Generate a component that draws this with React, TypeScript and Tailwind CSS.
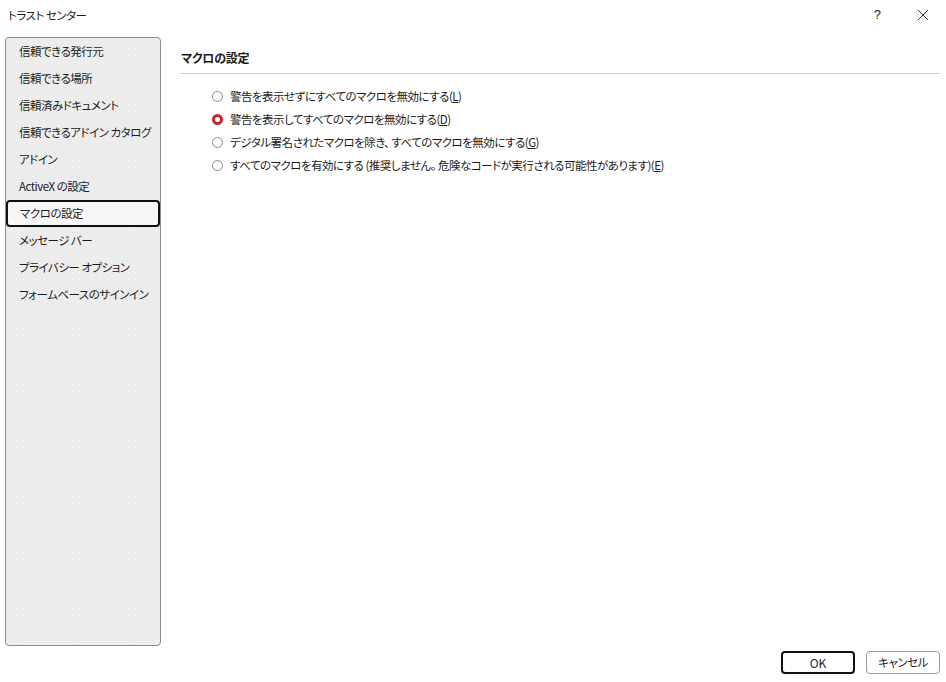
import React from "react";

const font = "font-['Yu_Gothic_UI','Noto_Sans_CJK_JP',sans-serif] [font-feature-settings:'palt']";

const items = [
  "信頼できる発行元",
  "信頼できる場所",
  "信頼済みドキュメント",
  "信頼できるアドイン カタログ",
  "アドイン",
  "ActiveX の設定",
  "マクロの設定",
  "メッセージ バー",
  "プライバシー オプション",
  "フォームベースのサインイン",
];

const options: { text: string; key: string }[] = [
  { text: "警告を表示せずにすべてのマクロを無効にする(", key: "L" },
  { text: "警告を表示してすべてのマクロを無効にする(", key: "D" },
  { text: "デジタル署名されたマクロを除き、 すべてのマクロを無効にする(", key: "G" },
  { text: "すべてのマクロを有効にする (推奨しません。 危険なコードが実行される可能性があります)(", key: "E" },
];

export default function App() {
  return (
    <div className={`w-[946px] h-[682px] bg-white text-[#1b1b1b] text-[11.5px] tracking-[-0.5px] whitespace-nowrap flex flex-col ${font}`}>
      <div className="h-[30px] flex items-center pl-[8px] pr-[17px]">
        <span className="flex-1 pt-[1px]">トラスト センター</span>
        <span className="w-[20px] mr-[30px] text-center text-[13px] font-['Liberation_Sans',sans-serif]">?</span>
        <svg width="12" height="12" viewBox="0 0 12 12">
          <path d="M1 1L11 11M11 1L1 11" stroke="#333" strokeWidth="1" />
        </svg>
      </div>
      <div className="flex pl-[5px] pt-[7px]">
        <div className="w-[156px] h-[609px] border border-[#8c8c8c] rounded-[4px] bg-[#ececec] bg-[radial-gradient(circle,#fbfbfb_0.7px,transparent_0.9px)] bg-[length:7px_7px] flex flex-col">
          {items.map((t, i) =>
            i === 6 ? (
              <div
                key={t}
                className="h-[27px] flex items-center pl-[12px] border-2 border-[#111] rounded-[4px] bg-white/60"
              >
                {t}
              </div>
            ) : (
              <div key={t} className="h-[27px] flex items-center pl-[13px]">
                {t}
              </div>
            )
          )}
        </div>
        <div className="flex-1 ml-[19px] mr-[6px]">
          <div className="h-[37px] flex items-center font-bold text-[12px] tracking-[-0.3px] pl-[1px] pt-[5px] border-b border-[#cdcdcd]">
            マクロの設定
          </div>
          <div className="pt-[11px] pl-[32px] flex flex-col">
            {options.map((o, i) => (
              <div key={o.key} className="h-[23px] flex items-center gap-[7px]">
                {i === 1 ? (
                  <span className="w-[11px] h-[11px] rounded-full border-[3px] border-[#c4262e] bg-white" />
                ) : (
                  <span className="w-[11px] h-[11px] rounded-full border border-[#8a8a8a] bg-white" />
                )}
                <span>
                  {o.text}
                  <span className="underline">{o.key}</span>)
                </span>
              </div>
            ))}
          </div>
        </div>
      </div>
      <div className="flex justify-end gap-[11px] pr-[6px] pt-[5px]">
        <button className="w-[74px] h-[23px] border-2 border-[#111] rounded-[4px] bg-white text-[12px] tracking-normal">OK</button>
        <button className="w-[74px] h-[23px] border border-[#9a9a9a] rounded-[4px] bg-white">キャンセル</button>
      </div>
    </div>
  );
}
